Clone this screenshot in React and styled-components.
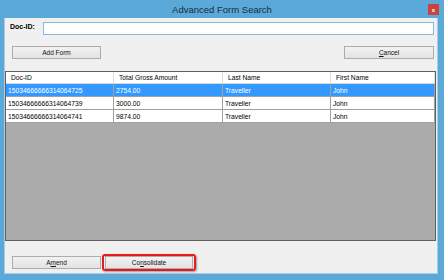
import React from 'react';
import styled, { createGlobalStyle } from 'styled-components';

const GlobalStyle = createGlobalStyle`
  html, body {
    margin: 0;
    padding: 0;
    width: 444px;
    height: 280px;
    overflow: hidden;
    background: #5aa9d8;
  }
`;

const Window = styled.div`
  width: 444px;
  height: 280px;
  box-sizing: border-box;
  background: #5aa9d8;
  display: flex;
  flex-direction: column;
  padding: 0 6px 6px 4px;
  font-family: "Liberation Sans", Arial, sans-serif;
`;

const TitleBar = styled.div`
  height: 18px;
  position: relative;
  display: flex;
  align-items: center;
  justify-content: center;
  color: #1b2d3f;
  font-size: 9.5px;
  padding-left: 2px;
`;

const CloseButton = styled.div`
  position: absolute;
  right: -1px;
  top: 4px;
  width: 11px;
  height: 11px;
  background: #c9433d;
  color: #fff;
  font-size: 6px;
  font-weight: bold;
  display: flex;
  align-items: center;
  justify-content: center;
`;

const Client = styled.div`
  flex: 1;
  background: #f0f0f0;
  border: 1px solid #a9cde8;
  border-top: none;
  display: flex;
  flex-direction: column;
  min-height: 0;
`;

const SearchRow = styled.div`
  display: flex;
  align-items: flex-start;
  padding: 4px 3px 0 5px;
  gap: 5px;
`;

const Label = styled.label`
  font-size: 7px;
  font-weight: bold;
  color: #000;
  padding-top: 1px;
  width: 28px;
`;

const TextInput = styled.div`
  flex: 1;
  height: 11px;
  background: #fff;
  border: 1px solid #8ab8e4;
`;

const ButtonRow = styled.div`
  display: flex;
  justify-content: ${(p) => (p.$spread ? 'space-between' : 'flex-start')};
  align-items: center;
  padding: ${(p) => p.$pad};
  gap: 1px;
`;

const Button = styled.div`
  width: ${(p) => p.$w || 88}px;
  height: 13px;
  box-sizing: border-box;
  border: 1px solid #acacac;
  background: linear-gradient(#f2f2f2, #e3e3e3);
  font-size: 6.5px;
  color: #111;
  display: flex;
  align-items: center;
  justify-content: center;
`;

const Highlight = styled.div`
  padding: 0 1px;
  border: 2px solid #e8191c;
  border-radius: 3px;
  box-shadow: 1px 1px 2px rgba(0, 0, 0, 0.35);
  display: flex;
`;

const U = styled.span`
  text-decoration: underline;
`;

const Grid = styled.div`
  margin: 12px 1px 0 0;
  height: 168px;
  border: 1px solid #5f5f5f;
  background: #ababab;
  display: flex;
  flex-direction: column;
`;

const Row = styled.div`
  display: grid;
  grid-template-columns: 108px 109px 108px 1fr;
  height: ${(p) => (p.$header ? 12 : 13)}px;
  background: ${(p) => (p.$selected ? '#3399ff' : '#fff')};
  color: ${(p) => (p.$selected ? '#fff' : '#000')};
  border-bottom: 1px solid ${(p) => (p.$header ? '#d5d5d5' : '#a0a0a0')};
  box-sizing: border-box;
`;

const Cell = styled.div`
  font-size: 6.7px;
  padding-left: ${(p) => (p.$header ? 5 : 2)}px;
  display: flex;
  align-items: center;
  border-right: 1px solid ${(p) => (p.$header ? '#e0e0e0' : '#a0a0a0')};
  white-space: nowrap;
  overflow: hidden;
`;

const rows = [
  ['15034666666314064725', '2754.00', 'Traveller', 'John'],
  ['15034666666314064739', '3000.00', 'Traveller', 'John'],
  ['15034666666314064741', '9874.00', 'Traveller', 'John'],
];

const headers = ['Doc-ID', 'Total Gross Amount', 'Last Name', 'First Name'];

const App = () => (
  <Window>
    <GlobalStyle />
    <TitleBar>
      Advanced Form Search
      <CloseButton>x</CloseButton>
    </TitleBar>
    <Client>
      <SearchRow>
        <Label>Doc-ID:</Label>
        <TextInput />
      </SearchRow>
      <ButtonRow $spread $pad="11px 3px 0 7px">
        <Button $w={89}>Add Form</Button>
        <Button $w={90}><U>C</U>ancel</Button>
      </ButtonRow>
      <Grid>
        <Row $header>
          {headers.map((h) => (
            <Cell key={h} $header>{h}</Cell>
          ))}
        </Row>
        {rows.map((r, i) => (
          <Row key={r[0]} $selected={i === 0}>
            {r.map((c, j) => (
              <Cell key={j}>{c}</Cell>
            ))}
          </Row>
        ))}
      </Grid>
      <ButtonRow $pad="13px 0 0 7px">
        <Button $w={89}>A<U>m</U>end</Button>
        <Highlight>
          <Button $w={88}>Co<U>n</U>solidate</Button>
        </Highlight>
      </ButtonRow>
    </Client>
  </Window>
);

export default App;
